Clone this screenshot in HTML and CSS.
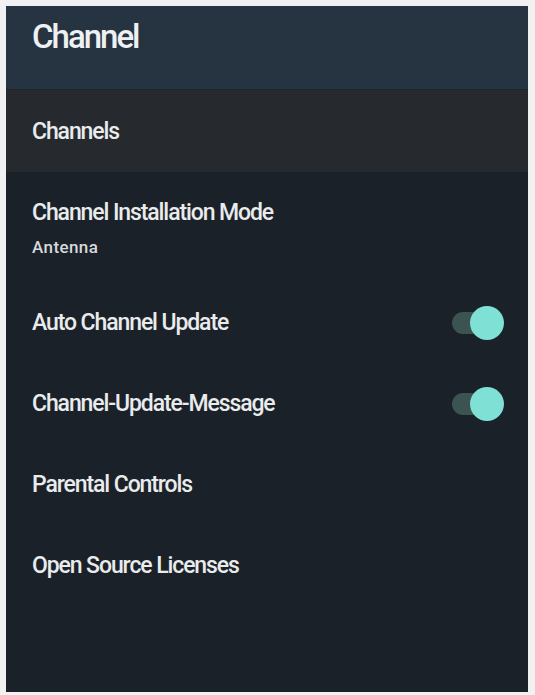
FILE: index.html
```html
<!DOCTYPE html>
<html lang="en">
<head>
    <meta charset="UTF-8">
    <meta name="viewport" content="width=device-width, initial-scale=1.0">
    <title>Channel</title>
    <link rel="stylesheet" href="styles.css">
</head>
<body>
    <div class="panel">
        <!-- Header -->
        <div class="panel-header">
            <h1>Channel</h1>
        </div>

        <!-- Focused item -->
        <div class="row row-focused">
            <span class="label">Channels</span>
        </div>

        <div class="list">
            <div class="row row-double">
                <span class="label">Channel Installation Mode</span>
                <span class="sub">Antenna</span>
            </div>
            <div class="row">
                <span class="label">Auto Channel Update</span>
                <span class="toggle on"><span class="thumb"></span></span>
            </div>
            <div class="row">
                <span class="label">Channel-Update-Message</span>
                <span class="toggle on"><span class="thumb"></span></span>
            </div>
            <div class="row">
                <span class="label">Parental Controls</span>
            </div>
            <div class="row">
                <span class="label">Open Source Licenses</span>
            </div>
        </div>
    </div>
</body>
</html>
```

FILE: styles.css
```css
body {
    margin: 0;
    background-color: #f1f1f1;
    font-family: Roboto, "Liberation Sans", sans-serif;
}
.panel {
    margin: 6px 7px 3px 6px;
    height: 686px;
    background-color: #1b2128;
    display: flex;
    flex-direction: column;
}
.panel-header {
    height: 83px;
    padding-left: 26px;
    background-color: #263442;
    border-bottom: 1px solid #1c242c;
    display: flex;
    align-items: flex-start;
}
.panel-header h1 {
    margin: 0;
    padding-top: 14px;
    font-size: 33px;
    line-height: 33px;
    font-weight: 500;
    letter-spacing: -2px;
    color: #eef0f2;
}
.row {
    height: 81px;
    padding: 0 26px 0 26px;
    display: flex;
    align-items: center;
    justify-content: space-between;
}
.row-focused {
    height: 82px;
    background-color: #26292e;
}
.row-double {
    height: 110px;
    flex-direction: column;
    align-items: flex-start;
    justify-content: flex-start;
    padding-top: 27px;
    box-sizing: border-box;
}
.label {
    font-size: 23px;
    font-weight: 500;
    letter-spacing: -1.1px;
    color: #e9ebed;
}
.sub {
    margin-top: 11px;
    font-size: 17px;
    font-weight: 500;
    letter-spacing: 0.4px;
    color: #d6d9dc;
}
.toggle {
    position: relative;
    width: 50px;
    height: 22px;
    border-radius: 11px;
    background-color: #3b5452;
}
.toggle .thumb {
    position: absolute;
    right: -2px;
    top: -6px;
    width: 34px;
    height: 34px;
    border-radius: 50%;
    background-color: #7fe0d6;
}
```
